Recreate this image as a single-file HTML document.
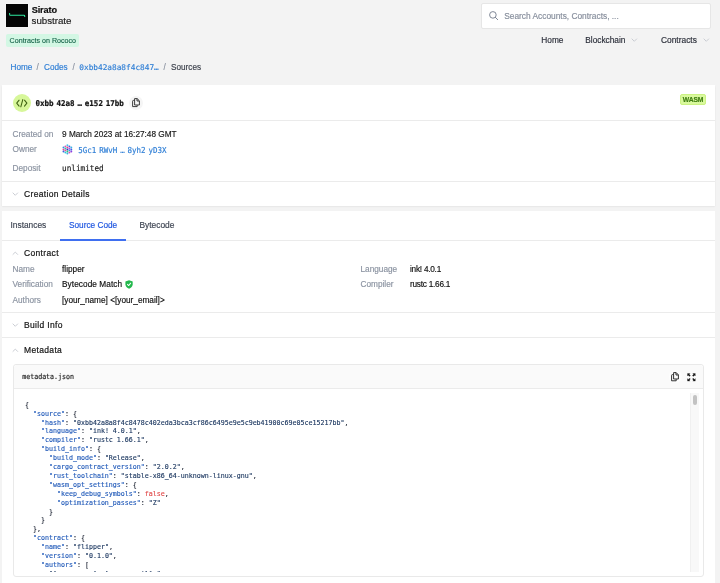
<!DOCTYPE html>
<html lang="en">
<head>
<meta charset="utf-8">
<title>Sirato substrate - Sources</title>
<style>
*{box-sizing:border-box;margin:0;padding:0}
html,body{width:720px;height:583px;overflow:hidden;background:#f3f3f3}
body{position:relative;will-change:transform;font-family:"Liberation Sans",sans-serif;font-size:8px;color:#111;-webkit-font-smoothing:antialiased}
.a{position:absolute;white-space:nowrap;line-height:1;-webkit-text-stroke:.16px}
.mono{font-family:"DejaVu Sans Mono","Liberation Mono",monospace}
.g{color:#8b93a1}
.b{color:#2f7fd6}
.card{position:absolute;background:#fff;left:2px;width:713px}
.hr{position:absolute;height:1px;background:#ebebeb;left:2px;width:713px}
.sec{font-size:8.5px;color:#151515;letter-spacing:.34px;-webkit-text-stroke:.2px #151515}
.t{font-size:8.25px}
svg{position:absolute;overflow:visible}
/* code */
#codewrap{position:absolute;left:0;top:392.5px;width:690px;height:179.3px;overflow:hidden}
#code{position:absolute;left:25px;top:7.75px;font-family:"DejaVu Sans Mono","Liberation Mono",monospace;font-size:13.28px;line-height:17.8px;color:#1d2433;white-space:pre;transform:scale(.5);transform-origin:0 0;-webkit-text-stroke:.25px}
#code .k{color:#1f58b8}
#code .s{color:#16325c}
#code .f{color:#e04646}
</style>
</head>
<body>

<!-- ===== top bar ===== -->
<div class="a" style="left:6px;top:4.4px;width:22.4px;height:22.5px;background:#050505;box-shadow:0 0 0 .5px #fafafa"></div>
<svg style="left:6px;top:4.4px" width="22.5" height="22.5" viewBox="0 0 22.5 22.5"><path d="M3.6 8.9 V10.4 Q3.6 11.2 4.4 11.2 H17.9 Q18.7 11.2 18.7 12 V13" fill="none" stroke="#2fe9a0" stroke-width="1.05" stroke-linecap="butt"/></svg>
<div class="a" style="left:31.7px;top:6px;font-size:9.2px;letter-spacing:-.13px;font-weight:700;color:#0c0c0c">Sirato</div>
<div class="a" style="left:31.6px;top:16.4px;font-size:9.75px;letter-spacing:-.04px;color:#1a1a1a">substrate</div>

<div class="a" style="left:6px;top:34px;width:73px;height:12.5px;background:#d3f7e4;border-radius:2px"></div>
<div class="a" style="left:9.6px;top:38px;font-size:7.12px;color:#17644a;-webkit-text-stroke:.12px #17644a">Contracts on Rococo</div>

<!-- search -->
<div class="a" style="left:481px;top:3px;width:230px;height:25.5px;background:#fff;border:1px solid #e6e6e6;border-radius:2px"></div>
<svg style="left:489px;top:11px" width="10" height="10" viewBox="0 0 10 10"><circle cx="3.9" cy="3.9" r="3.3" fill="none" stroke="#808897" stroke-width="1"/><path d="M6.3 6.3 L8.7 8.7" stroke="#808897" stroke-width="1" stroke-linecap="round"/></svg>
<div class="a" style="left:504.2px;top:11.8px;font-size:8.35px;color:#868e9c">Search Accounts, Contracts, ...</div>

<!-- nav -->
<div class="a" style="left:541.3px;top:36.3px;font-size:8.3px;color:#2b2f3a">Home</div>
<div class="a" style="left:585.3px;top:36.3px;font-size:8.3px;color:#2b2f3a">Blockchain</div>
<svg style="left:631px;top:38.2px" width="6.6" height="4.4" viewBox="0 0 6 4"><path d="M0.6 0.6 L3 3 L5.4 0.6" fill="none" stroke="#c3c7ce" stroke-width="0.8"/></svg>
<div class="a" style="left:661px;top:36.3px;font-size:8.4px;color:#2b2f3a">Contracts</div>
<svg style="left:702.8px;top:38.2px" width="6.6" height="4.4" viewBox="0 0 6 4"><path d="M0.6 0.6 L3 3 L5.4 0.6" fill="none" stroke="#c3c7ce" stroke-width="0.8"/></svg>

<!-- breadcrumb -->
<div class="a b" style="left:10.5px;top:64.3px;font-size:8.2px">Home</div>
<div class="a g" style="left:36.5px;top:64.3px;font-size:8.2px">/</div>
<div class="a b" style="left:44px;top:64.3px;font-size:8.2px">Codes</div>
<div class="a g" style="left:72.5px;top:64.3px;font-size:8.2px">/</div>
<div class="a b mono" style="left:79.3px;top:63.6px;font-size:7.77px">0xbb42a8a8f4c847…</div>
<div class="a g" style="left:163.5px;top:64.3px;font-size:8.2px">/</div>
<div class="a" style="left:171px;top:64.3px;font-size:8.2px;color:#3a3f4a">Sources</div>

<!-- ===== card 1 ===== -->
<div class="card" style="top:84.5px;height:121.9px;box-shadow:0 .6px 1.6px rgba(0,0,0,.09)"></div>
<div class="a" style="left:13px;top:93.75px;width:18px;height:18px;border-radius:50%;background:#d7f79a"></div>
<svg style="left:16.2px;top:98.6px" width="11.6" height="8.4" viewBox="0 0 11.6 8.4"><path d="M3.1 1.2 L0.7 4.2 L3.1 7.2 M8.5 1.2 L10.9 4.2 L8.5 7.2 M6.8 0.6 L4.8 7.8" fill="none" stroke="#3f6212" stroke-width="1.05" stroke-linecap="round" stroke-linejoin="round"/></svg>
<div class="a mono" style="left:35.5px;top:100px;font-size:7.53px;word-spacing:-1.66px;font-weight:700;color:#111;-webkit-text-stroke:.22px;transform:scaleY(1.06);transform-origin:50% 60%">0xbb 42a8 … e152 17bb</div>
<div class="a" style="left:129px;top:95.8px;width:14px;height:14px;border-radius:50%;background:#f5f5f5"></div>
<svg style="left:132px;top:98.3px" width="8" height="9.2" viewBox="0 0 8 9.2"><path d="M2.6 0.6 H5.2 L7.4 2.8 V7 H2.6 Z M5 0.8 V3 H7.2" fill="none" stroke="#1c1c1c" stroke-width="0.85" stroke-linejoin="round"/><path d="M2.4 2.4 H1.4 Q0.6 2.4 0.6 3.2 V8.6 H5.2 V7.2" fill="none" stroke="#1c1c1c" stroke-width="0.85" stroke-linejoin="round"/></svg>
<div class="a" style="left:680.4px;top:93.7px;width:25.6px;height:10.9px;background:#d9f99d;border:.6px solid #cbf283;border-radius:2px"></div>
<div class="a" style="left:682.8px;top:97px;font-size:6.75px;color:#3f7d12;font-weight:700;letter-spacing:-.12px">WASM</div>
<div class="hr" style="top:120.3px"></div>

<div class="a g t" style="left:12.5px;top:131px">Created on</div>
<div class="a t" style="left:62px;top:131px;color:#1a1a1a">9 March 2023 at 16:27:48 GMT</div>
<div class="a g t" style="left:12.5px;top:146px">Owner</div>
<svg style="left:62.4px;top:144.4px" width="10.8" height="10.8" viewBox="0 0 21 21">
<circle cx="10.5" cy="2.6" r="1.9" fill="#3fc3e8"/><circle cx="6.6" cy="4.6" r="1.9" fill="#e04fb0"/><circle cx="14.4" cy="4.6" r="1.9" fill="#3b5fe0"/>
<circle cx="2.9" cy="6.6" r="1.9" fill="#2d8fe0"/><circle cx="10.5" cy="6.6" r="1.9" fill="#ea3f7f"/><circle cx="18.1" cy="6.6" r="1.9" fill="#34b3e4"/>
<circle cx="6.6" cy="8.6" r="1.9" fill="#28c0b0"/><circle cx="14.4" cy="8.6" r="1.9" fill="#c33fe0"/>
<circle cx="2.9" cy="10.5" r="1.9" fill="#e0479e"/><circle cx="10.5" cy="10.5" r="1.9" fill="#2a3fc0"/><circle cx="18.1" cy="10.5" r="1.9" fill="#3b5fe0"/>
<circle cx="6.6" cy="12.4" r="1.9" fill="#f04f8f"/><circle cx="14.4" cy="12.4" r="1.9" fill="#2da0e8"/>
<circle cx="2.9" cy="14.4" r="1.9" fill="#3b5fe0"/><circle cx="10.5" cy="14.4" r="1.9" fill="#35c070"/><circle cx="18.1" cy="14.4" r="1.9" fill="#8a3fe0"/>
<circle cx="6.6" cy="16.4" r="1.9" fill="#2ac6d6"/><circle cx="14.4" cy="16.4" r="1.9" fill="#e04fb0"/><circle cx="10.5" cy="18.4" r="1.9" fill="#34b3e4"/>
</svg>
<div class="a b mono" style="left:78.2px;top:147.2px;font-size:7.5px;word-spacing:-1.6px;transform:scaleY(1.1);transform-origin:50% 60%">5Gc1 RWvH … 8yh2 yD3X</div>
<div class="a g t" style="left:12.5px;top:165.2px">Deposit</div>
<div class="a mono" style="left:62px;top:165px;font-size:7.7px;color:#222;transform:scaleY(1.08);transform-origin:50% 60%">unlimited</div>
<div class="hr" style="top:180.7px"></div>
<svg style="left:11.8px;top:192px" width="6.6" height="4.4" viewBox="0 0 6 4"><path d="M0.6 0.6 L3 3 L5.4 0.6" fill="none" stroke="#c3c7ce" stroke-width="0.8"/></svg>
<div class="a sec" style="left:24px;top:190px">Creation Details</div>

<!-- ===== card 2 ===== -->
<div class="card" style="top:210.5px;height:373px"></div>
<div class="a t" style="left:10.5px;top:221.4px;color:#3d4452;font-size:8.35px">Instances</div>
<div class="a t" style="left:69px;top:221.5px;color:#1d55e0;font-size:8.25px">Source Code</div>
<div class="a t" style="left:139.5px;top:221.4px;color:#3d4452;font-size:8.4px">Bytecode</div>
<div class="hr" style="top:239.8px"></div>
<div class="a" style="left:60px;top:239.4px;width:65.8px;height:1.8px;background:#3f6ff0"></div>

<svg style="left:11.8px;top:251px" width="6.6" height="4.4" viewBox="0 0 6 4"><path d="M0.6 3.4 L3 1 L5.4 3.4" fill="none" stroke="#c3c7ce" stroke-width="0.8"/></svg>
<div class="a sec" style="left:24px;top:249px">Contract</div>
<div class="a g t" style="left:12.5px;top:266px">Name</div>
<div class="a t" style="left:62px;top:266px">flipper</div>
<div class="a g t" style="left:12.5px;top:280.9px">Verification</div>
<div class="a t" style="left:62px;top:280.9px;letter-spacing:.07px">Bytecode Match</div>
<svg style="left:125.4px;top:280.3px" width="8.1" height="8.7" viewBox="0 0 16 16" preserveAspectRatio="none"><path d="M8 0.3 L15.2 2.7 V7.6 C15.2 11.8 12 14.5 8 15.9 C4 14.5 0.8 11.8 0.8 7.6 V2.7 Z" fill="#22b84c"/><path d="M4.9 8 L7.2 10.2 L11.2 5.9" fill="none" stroke="#fff" stroke-width="1.9" stroke-linecap="round" stroke-linejoin="round"/></svg>
<div class="a g t" style="left:12.5px;top:297px">Authors</div>
<div class="a t" style="left:62px;top:297px">[your_name] &lt;[your_email]&gt;</div>
<div class="a g t" style="left:360.5px;top:266px">Language</div>
<div class="a t" style="left:410px;top:266px;letter-spacing:-.25px">ink! 4.0.1</div>
<div class="a g t" style="left:360.5px;top:280.9px">Compiler</div>
<div class="a t" style="left:410px;top:280.9px;letter-spacing:-.25px">rustc 1.66.1</div>
<div class="hr" style="top:311.5px"></div>
<svg style="left:11.8px;top:323px" width="6.6" height="4.4" viewBox="0 0 6 4"><path d="M0.6 0.6 L3 3 L5.4 0.6" fill="none" stroke="#c3c7ce" stroke-width="0.8"/></svg>
<div class="a sec" style="left:24px;top:321px">Build Info</div>
<div class="hr" style="top:336.5px"></div>
<svg style="left:11.8px;top:348px" width="6.6" height="4.4" viewBox="0 0 6 4"><path d="M0.6 3.4 L3 1 L5.4 3.4" fill="none" stroke="#c3c7ce" stroke-width="0.8"/></svg>
<div class="a sec" style="left:24px;top:346px">Metadata</div>

<!-- code box -->
<div class="a" style="left:12.5px;top:364px;width:691px;height:212.5px;background:#fff;border:1px solid #e9e9e9;border-radius:3px"></div>
<div class="a" style="left:13.5px;top:365px;width:689px;height:23.8px;background:#fafafa;border-bottom:1px solid #ebebeb;border-radius:3px 3px 0 0"></div>
<div class="a mono" style="left:22.2px;top:373.9px;font-size:6.64px;color:#222;transform:scaleY(1.1);transform-origin:50% 60%">metadata.json</div>

<div class="a" style="left:668.5px;top:370.2px;width:13px;height:13px;border-radius:50%;background:#fdfdfd"></div>
<svg style="left:671px;top:372px" width="8" height="9.4" viewBox="0 0 8 9.4"><path d="M2.6 0.6 H5.2 L7.4 2.8 V7 H2.6 Z M5 0.8 V3 H7.2" fill="none" stroke="#1c1c1c" stroke-width="0.9" stroke-linejoin="round"/><path d="M2.4 2.6 H1.4 Q0.6 2.6 0.6 3.4 V8.8 H5.2 V7.2" fill="none" stroke="#1c1c1c" stroke-width="0.9" stroke-linejoin="round"/></svg>
<svg style="left:687.2px;top:372.5px" width="8.8" height="8.6" viewBox="0 0 8.8 8.6"><g fill="#111" stroke="#111" stroke-width="0.25" stroke-linejoin="round"><path d="M0.5 0.5 H3 L2.2 1.3 L3.4 2.5 L2.5 3.4 L1.3 2.2 L0.5 3 Z"/><path d="M8.3 0.5 H5.8 L6.6 1.3 L5.4 2.5 L6.3 3.4 L7.5 2.2 L8.3 3 Z"/><path d="M0.5 8.1 H3 L2.2 7.3 L3.4 6.1 L2.5 5.2 L1.3 6.4 L0.5 5.6 Z"/><path d="M8.3 8.1 H5.8 L6.6 7.3 L5.4 6.1 L6.3 5.2 L7.5 6.4 L8.3 5.6 Z"/></g></svg>
<div class="a" style="left:690.4px;top:392.5px;width:8.3px;height:179.3px;background:#f8f8f8;border-left:1px solid #f0f0f0"></div>
<div class="a" style="left:692.9px;top:395px;width:4px;height:9.8px;border-radius:2px;background:#c2c2c2"></div>
<div id="codewrap"><pre id="code">{
  <span class="k">"source"</span>: {
    <span class="k">"hash"</span>: <span class="s">"0xbb42a8a8f4c8478c402eda3bca3cf86c6495e9e5c9eb41900c69e05ce15217bb"</span>,
    <span class="k">"language"</span>: <span class="s">"ink! 4.0.1"</span>,
    <span class="k">"compiler"</span>: <span class="s">"rustc 1.66.1"</span>,
    <span class="k">"build_info"</span>: {
      <span class="k">"build_mode"</span>: <span class="s">"Release"</span>,
      <span class="k">"cargo_contract_version"</span>: <span class="s">"2.0.2"</span>,
      <span class="k">"rust_toolchain"</span>: <span class="s">"stable-x86_64-unknown-linux-gnu"</span>,
      <span class="k">"wasm_opt_settings"</span>: {
        <span class="k">"keep_debug_symbols"</span>: <span class="f">false</span>,
        <span class="k">"optimization_passes"</span>: <span class="s">"Z"</span>
      }
    }
  },
  <span class="k">"contract"</span>: {
    <span class="k">"name"</span>: <span class="s">"flipper"</span>,
    <span class="k">"version"</span>: <span class="s">"0.1.0"</span>,
    <span class="k">"authors"</span>: [
      <span class="s">"[your_name] &lt;[your_email]&gt;"</span>
</pre></div>
</body>
</html>
